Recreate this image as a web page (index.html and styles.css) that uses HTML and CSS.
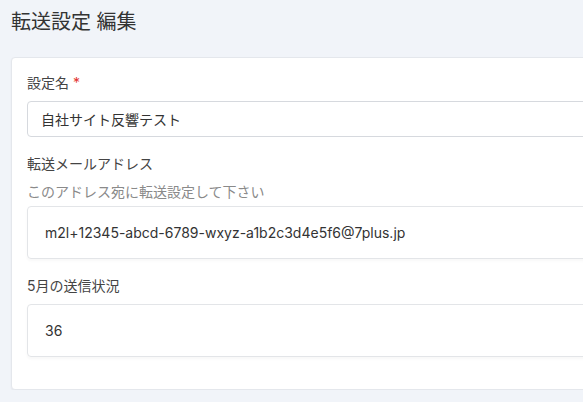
FILE: index.html
```html
<!DOCTYPE html>
<html lang="ja">
  <head>
    <meta charset="UTF-8" />
    <meta name="viewport" content="width=device-width, initial-scale=1.0" />
    <title>転送設定 編集</title>
    <link rel="stylesheet" href="styles.css">
  </head>
  <body>
    <div class="page">
      <h1 class="page-title">転送設定 編集</h1>

      <div class="card">
        <div class="field">
          <label class="field-label" for="settingName">設定名 <span class="required">*</span></label>
          <input class="text-input" type="text" id="settingName" value="自社サイト反響テスト" />
        </div>

        <div class="field">
          <div class="field-label">転送メールアドレス</div>
          <div class="field-help">このアドレス宛に転送設定して下さい</div>
          <div class="static-box">m2l+12345-abcd-6789-wxyz-a1b2c3d4e5f6@7plus.jp</div>
        </div>

        <div class="field">
          <div class="field-label">5月の送信状況</div>
          <div class="static-box">36</div>
        </div>
      </div>
    </div>
  </body>
</html>
```

FILE: styles.css
```css
/* Basic styles */
body {
  font-family: "Inter", "Noto Sans CJK JP", sans-serif;
  background-color: #f1f4f9;
  color: #333;
  margin: 0;
  overflow: hidden;
}

.page {
  padding: 7px 0 0 11px;
}

.page-title {
  font-size: 20px;
  font-weight: 400;
  line-height: 30px;
  margin: 0 0 20px;
  color: #333;
}

.card {
  width: 640px;
  background-color: #ffffff;
  border: 1px solid #e4e7ec;
  border-radius: 4px;
  box-shadow: 0 1px 2px rgba(0, 0, 0, 0.05);
  padding: 15px 15px 32px;
}

.field + .field {
  margin-top: 17px;
}

.field-label {
  display: block;
  font-size: 14px;
  line-height: 20px;
  color: #444;
  margin-bottom: 8px;
}

.required {
  color: #e3342f;
}

.field-help {
  font-size: 14px;
  line-height: 20px;
  color: #8a8a8a;
  margin-top: 1px;
  margin-bottom: 4px;
}

.text-input {
  display: block;
  width: 100%;
  height: 36px;
  box-sizing: border-box;
  padding: 0 13px;
  font-family: inherit;
  font-size: 14px;
  color: #333;
  border: 1px solid #d6d9de;
  border-radius: 4px;
  background: #fff;
  outline: none;
}

.static-box {
  height: 53px;
  box-sizing: border-box;
  padding: 0 17px;
  display: flex;
  align-items: center;
  font-size: 14px;
  color: #333;
  border: 1px solid #e3e5e8;
  border-radius: 4px;
  box-shadow: 0 2px 3px rgba(0, 0, 0, 0.03);
}
```
